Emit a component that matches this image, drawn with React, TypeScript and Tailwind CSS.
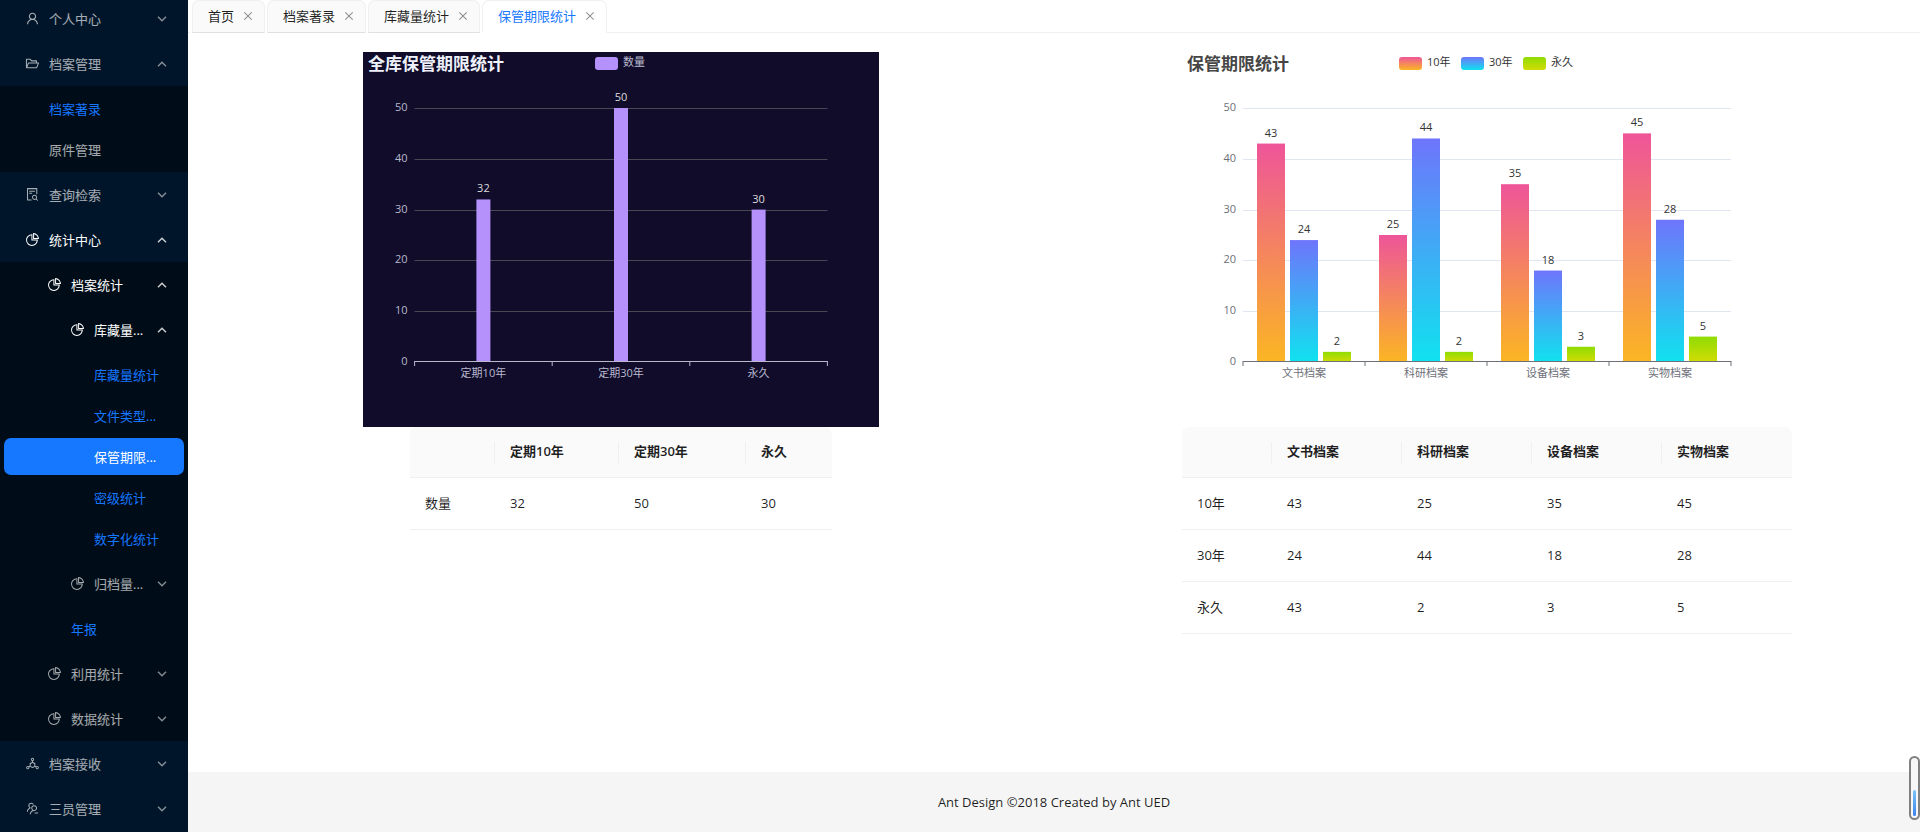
import { useState, type ReactNode } from "react";
import {
  AiOutlineClose,
  AiOutlineDeploymentUnit,
  AiOutlineFileSearch,
  AiOutlineFolderOpen,
  AiOutlinePieChart,
  AiOutlineUser,
  AiOutlineUsergroupDelete,
} from "react-icons/ai";

type MenuNode = {
  key: string;
  label: string;
  icon?: ReactNode;
  link?: boolean;
  children?: MenuNode[];
};

const MENU: MenuNode[] = [
  { key: "user", label: "个人中心", icon: <AiOutlineUser />, children: [] },
  {
    key: "archive",
    label: "档案管理",
    icon: <AiOutlineFolderOpen />,
    children: [
      { key: "record", label: "档案著录", link: true },
      { key: "original", label: "原件管理" },
    ],
  },
  { key: "search", label: "查询检索", icon: <AiOutlineFileSearch />, children: [] },
  {
    key: "stat",
    label: "统计中心",
    icon: <AiOutlinePieChart />,
    children: [
      {
        key: "archiveStat",
        label: "档案统计",
        icon: <AiOutlinePieChart />,
        children: [
          {
            key: "stock",
            label: "库藏量...",
            icon: <AiOutlinePieChart />,
            children: [
              { key: "stockStat", label: "库藏量统计", link: true },
              { key: "fileType", label: "文件类型...", link: true },
              { key: "retention", label: "保管期限...", link: true },
              { key: "secret", label: "密级统计", link: true },
              { key: "digital", label: "数字化统计", link: true },
            ],
          },
          { key: "filed", label: "归档量...", icon: <AiOutlinePieChart />, children: [] },
          { key: "annual", label: "年报", link: true },
        ],
      },
      { key: "useStat", label: "利用统计", icon: <AiOutlinePieChart />, children: [] },
      { key: "dataStat", label: "数据统计", icon: <AiOutlinePieChart />, children: [] },
    ],
  },
  { key: "receive", label: "档案接收", icon: <AiOutlineDeploymentUnit />, children: [] },
  { key: "admins", label: "三员管理", icon: <AiOutlineUsergroupDelete />, children: [] },
];

const TABS = ["首页", "档案著录", "库藏量统计", "保管期限统计"];

// one entry per nesting level
const ITEM_INDENT = ["pl-[22px]", "pl-[45px]", "pl-[67px]", "pl-[90px]"];
const TITLE_INDENT = ["pl-[21px]", "pl-[43px]", "pl-[66px]"];

function hasKey(node: MenuNode, key: string): boolean {
  return node.key === key || !!node.children?.some((c) => hasKey(c, key));
}

function Arrow({ open }: { open: boolean }) {
  return (
    <svg
      viewBox="0 0 10 6"
      className="h-1.5 w-2.5 shrink-0 opacity-80"
      fill="none"
      stroke="currentColor"
      strokeWidth="1.4"
    >
      <path d={open ? "M1 5.3 5 1.2 9 5.3" : "M1 .7 5 4.8 9 .7"} />
    </svg>
  );
}

type MenuProps = {
  nodes: MenuNode[];
  level: number;
  opened: string[];
  selected: string;
  onToggle: (key: string) => void;
  onSelect: (key: string) => void;
};

function Menu({ nodes, level, opened, selected, onToggle, onSelect }: MenuProps) {
  return (
    <ul className={level === 1 ? "flow-root bg-[#000c17]" : "flow-root"}>
      {nodes.map((node) => {
        if (!node.children) {
          const active = node.key === selected;
          const color = active
            ? "bg-[#1677ff] text-white"
            : node.link
              ? "text-[#1677ff]"
              : "text-white/65";
          return (
            <li key={node.key} className="mx-1 my-1">
              <a
                href="#"
                onClick={() => onSelect(node.key)}
                className={`flex h-[37px] items-center rounded-[7px] ${ITEM_INDENT[level]} ${color}`}
              >
                {node.label}
              </a>
            </li>
          );
        }

        const open = opened.includes(node.key);
        return (
          <li key={node.key} className="flow-root">
            <button
              onClick={() => onToggle(node.key)}
              className={`mx-1 my-1 flex h-[37px] w-[180px] items-center gap-[9px] pr-[17px] ${TITLE_INDENT[level]} ${
                hasKey(node, selected) ? "text-white" : "text-white/65"
              }`}
            >
              <span className="text-[15px]">{node.icon}</span>
              <span className="flex-1 text-left">{node.label}</span>
              <Arrow open={open} />
            </button>
            {open && (
              <Menu
                nodes={node.children}
                level={level + 1}
                opened={opened}
                selected={selected}
                onToggle={onToggle}
                onSelect={onSelect}
              />
            )}
          </li>
        );
      })}
    </ul>
  );
}

type Series = { name: string; from: string; to: string; data: number[] };

type ChartProps = {
  title: string;
  width: number;
  categories: string[];
  series: Series[];
  barWidth: number;
  barGap: number;
  dark?: boolean;
};

const CHART_H = 375;
const PLOT_TOP = 56;
const PLOT_BOTTOM = 310;
const MAX = 50;

function BarChart({ title, width, categories, series, barWidth, barGap, dark }: ChartProps) {
  const left = width * 0.1;
  const right = width * 0.9;
  const band = (right - left) / categories.length;
  const scale = (PLOT_BOTTOM - PLOT_TOP) / MAX;
  const group = series.length * barWidth + (series.length - 1) * barGap;
  const id = dark ? "all" : "kind";

  const titleColor = dark ? "#eef1fa" : "#464646";
  const legendColor = dark ? "#b9b8ce" : "#333";
  const axisColor = dark ? "#b9b8ce" : "#6e7079";
  const gridColor = dark ? "#484753" : "#e0e6f1";
  const labelColor = dark ? "#ddd" : "#333";

  const item = 62;
  const legendW = series.length * item - 10;
  const legendX = (width - legendW) / 2;

  return (
    <svg
      width={width}
      height={CHART_H}
      viewBox={`0 0 ${width} ${CHART_H}`}
      className={dark ? "bg-[#100c2a]" : ""}
      fontSize="11"
    >
      <defs>
        {series.map((s, i) => (
          <linearGradient key={s.name} id={`${id}-${i}`} x1="0" y1="0" x2="0" y2="1">
            <stop offset="0" stopColor={s.from} />
            <stop offset="1" stopColor={s.to} />
          </linearGradient>
        ))}
      </defs>

      <text x="5" y="18" fontSize="17" fontWeight="700" fill={titleColor}>
        {title}
      </text>

      {series.map((s, i) => (
        <g key={s.name}>
          <rect x={legendX + i * item} y="5" width="23" height="13" rx="3" fill={`url(#${id}-${i})`} />
          <text x={legendX + i * item + 28} y="14" fill={legendColor}>
            {s.name}
          </text>
        </g>
      ))}

      {[0, 10, 20, 30, 40, 50].map((v) => {
        const y = Math.round(PLOT_BOTTOM - v * scale) + 0.5;
        return (
          <g key={v}>
            {v > 0 && <path d={`M${left} ${y}H${right}`} stroke={gridColor} />}
            <text x={left - 7} y={y + 2} textAnchor="end" fill={axisColor}>
              {v}
            </text>
          </g>
        );
      })}

      {categories.map((name, c) => {
        const center = left + band * (c + 0.5);
        return (
          <g key={name} textAnchor="middle">
            {series.map((s, i) => {
              const x = center - group / 2 + i * (barWidth + barGap);
              const y = PLOT_BOTTOM - s.data[c] * scale;
              return (
                <g key={s.name}>
                  <rect x={x} y={y} width={barWidth} height={PLOT_BOTTOM - y} fill={`url(#${id}-${i})`} />
                  <text x={x + barWidth / 2} y={y - 7} fill={labelColor}>
                    {s.data[c]}
                  </text>
                </g>
              );
            })}
            <text x={center} y={PLOT_BOTTOM + 15} fill={axisColor}>
              {name}
            </text>
          </g>
        );
      })}

      <path d={`M${left} ${PLOT_BOTTOM - 0.5}H${right}`} stroke={axisColor} />
      {[...categories, ""].map((_, i) => (
        <path key={i} d={`M${left + band * i} ${PLOT_BOTTOM - 1}v5`} stroke={axisColor} />
      ))}
    </svg>
  );
}

type TableProps = { head: string[]; rows: (string | number)[][]; cols: string[]; className: string };

function DataTable({ head, rows, cols, className }: TableProps) {
  return (
    <table className={`table-fixed border-separate border-spacing-0 text-left text-black/88 ${className}`}>
      <colgroup>
        {cols.map((c, i) => (
          <col key={i} className={c} />
        ))}
      </colgroup>
      <thead>
        <tr>
          {head.map((h, i) => (
            <th
              key={i}
              className="relative h-[51px] border-b border-[#f0f0f0] bg-[#fafafa] px-[15px] pb-0.5 font-semibold first:rounded-tl-[7px] last:rounded-tr-[7px]"
            >
              {h}
              {i < head.length - 1 && (
                <span className="absolute top-[15px] right-0 h-[21px] w-px bg-[#f0f0f0]" />
              )}
            </th>
          ))}
        </tr>
      </thead>
      <tbody>
        {rows.map((row, r) => (
          <tr key={r}>
            {row.map((cell, i) => (
              <td key={i} className="h-[52px] border-b border-[#f0f0f0] px-[15px] pb-0.5">
                {cell}
              </td>
            ))}
          </tr>
        ))}
      </tbody>
    </table>
  );
}

export default function App() {
  const [opened, setOpened] = useState(["archive", "stat", "archiveStat", "stock"]);
  const [selected, setSelected] = useState("retention");
  const [tab, setTab] = useState("保管期限统计");

  function toggle(key: string) {
    setOpened((prev) => (prev.includes(key) ? prev.filter((k) => k !== key) : [...prev, key]));
  }

  return (
    <div className="flex h-screen overflow-hidden bg-white font-['Open_Sans','Noto_Sans_CJK_SC',sans-serif] text-[13px] leading-5">
      <nav className="w-[188px] shrink-0 overflow-hidden bg-[#001529]">
        <div className="-mt-1">
          <Menu
            nodes={MENU}
            level={0}
            opened={opened}
            selected={selected}
            onToggle={toggle}
            onSelect={setSelected}
          />
        </div>
      </nav>

      <div className="flex min-w-0 flex-1 flex-col">
        <div className="flex h-[33px] shrink-0 gap-0.5">
          <div className="w-0.5 border-b border-[#f0f0f0]" />
          {TABS.map((name) => (
            <div
              key={name}
              className={`flex items-center gap-2 rounded-t-[7px] border pr-2.5 pb-0.5 pl-[15px] ${
                name === tab
                  ? "border-[#f0f0f0] border-b-white bg-white text-[#1677ff]"
                  : "border-[#f0f0f0] border-b-[#e0e0e0] bg-[#fafafa] text-black/88"
              }`}
            >
              <button onClick={() => setTab(name)}>{name}</button>
              <button aria-label={`关闭${name}`} className="text-xs text-black/45">
                <AiOutlineClose />
              </button>
            </div>
          ))}
          <div className="-ml-0.5 flex-1 border-b border-[#f0f0f0]" />
        </div>

        <main className="grid flex-1 grid-cols-2 items-start pt-[19px]">
          <section className="flex flex-col items-center">
            <BarChart
              dark
              title="全库保管期限统计"
              width={516}
              categories={["定期10年", "定期30年", "永久"]}
              barWidth={14}
              barGap={0}
              series={[{ name: "数量", from: "#b592fb", to: "#b592fb", data: [32, 50, 30] }]}
            />
            <DataTable
              className="w-[422px]"
              cols={["w-[85px]", "w-[124px]", "w-[127px]", "w-[86px]"]}
              head={["", "定期10年", "定期30年", "永久"]}
              rows={[["数量", 32, 50, 30]]}
            />
          </section>

          <section className="flex flex-col items-center">
            <BarChart
              title="保管期限统计"
              width={610}
              categories={["文书档案", "科研档案", "设备档案", "实物档案"]}
              barWidth={28}
              barGap={5}
              series={[
                { name: "10年", from: "#ee5599", to: "#fbb623", data: [43, 25, 35, 45] },
                { name: "30年", from: "#6e75fb", to: "#10e2ef", data: [24, 44, 18, 28] },
                { name: "永久", from: "#8fdc04", to: "#d2dc04", data: [2, 2, 3, 5] },
              ]}
            />
            <DataTable
              className="w-[610px]"
              cols={["w-[90px]", "w-[130px]", "w-[130px]", "w-[130px]", "w-[130px]"]}
              head={["", "文书档案", "科研档案", "设备档案", "实物档案"]}
              rows={[
                ["10年", 43, 25, 35, 45],
                ["30年", 24, 44, 18, 28],
                ["永久", 43, 2, 3, 5],
              ]}
            />
          </section>
        </main>

        <footer className="flex h-[60px] shrink-0 items-center justify-center bg-[#f5f5f5] text-black/88">
          Ant Design ©2018 Created by Ant UED
        </footer>
      </div>

      <div className="fixed right-0 bottom-3 flex h-16 w-[11px] flex-col justify-end rounded-full border-2 border-[#808080] bg-[#f7f7f7] p-0.5">
        <div className="h-[26px] rounded-full bg-linear-to-b from-[#7cc4f5] to-[#3b82f0]" />
      </div>
    </div>
  );
}
